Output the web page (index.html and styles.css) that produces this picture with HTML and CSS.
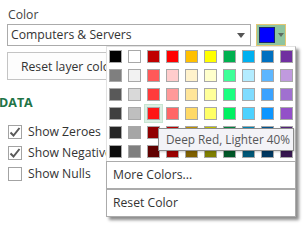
FILE: index.html
```html
<!DOCTYPE html>
<html>
<head>
  <title>Layer color</title>
  <link rel="stylesheet" href="styles.css">
</head>
<body>
  <div class="panel">
    <div class="label">Color</div>
    <div class="color-row">
      <div class="select">
        <span class="select-text">Computers &amp; Servers</span>
        <span class="caret"></span>
      </div>
      <div class="color-btn">
        <span class="current"></span>
        <span class="caret small"></span>
      </div>
    </div>
    <button type="button" class="reset-btn">Reset layer color</button>
    <div class="section">DATA</div>
    <label class="check">
      <span class="box"><svg width="12" height="12" viewBox="0 0 12 12"><path d="M1.5 6.5 L4.5 9.5 L10.5 2" fill="none" stroke="#5a5a5a" stroke-width="2"/></svg></span>
      Show Zeroes
    </label>
    <label class="check">
      <span class="box"><svg width="12" height="12" viewBox="0 0 12 12"><path d="M1.5 6.5 L4.5 9.5 L10.5 2" fill="none" stroke="#5a5a5a" stroke-width="2"/></svg></span>
      Show Negatives
    </label>
    <label class="check">
      <span class="box"></span>
      Show Nulls
    </label>
  </div>

  <div class="popup">
    <div class="palette" id="palette"></div>
    <div class="menu-item">More Colors...</div>
    <div class="menu-item">Reset Color</div>
    <div class="tooltip">Deep Red, Lighter 40%</div>
  </div>

  <script>
    const colors = [
      '#000000', '#ffffff', '#c00000', '#ff0000', '#ffc000', '#ffff00', '#00b050', '#00b0f0', '#0070c0', '#7030a0',
      '#7f7f7f', '#f2f2f2', '#ff5959', '#ffcccc', '#fff2cc', '#ffffcc', '#3dff98', '#b3ecff', '#5db6ff', '#c09ade',
      '#595959', '#d9d9d9', '#ff3b3b', '#ff9999', '#ffe599', '#ffff99', '#1aff80', '#7fdcff', '#3aa2ff', '#a070d0',
      '#404040', '#bfbfbf', '#ff1616', '#ff6666', '#ffd966', '#ffff66', '#00f062', '#4dd2ff', '#0e96ff', '#9350c8',
      '#262626', '#a6a6a6', '#900000', '#bf0000', '#bf9000', '#bfbf00', '#008440', '#0084b4', '#005490', '#54247a',
      '#0d0d0d', '#7f7f7f', '#600000', '#9c0000', '#7f6000', '#7f7f00', '#005828', '#005878', '#003860', '#381850'
    ];
    const palette = document.getElementById('palette');
    for (let i = 0; i < colors.length; i++) {
      const cell = document.createElement('span');
      cell.className = 'swatch';
      if (i === 32) {
        cell.classList.add('selected');
      }
      cell.style.background = colors[i];
      palette.appendChild(cell);
    }
  </script>
</body>
</html>
```

FILE: styles.css
```css
body {
  margin: 0;
  width: 304px;
  height: 246px;
  overflow: hidden;
  background-color: white;
  font-family: "Open Sans", "Noto Sans", sans-serif;
  font-size: 12.2px;
  color: #333;
}

.panel {
  padding: 6px 0 0 7px;
}

.label {
  line-height: 17px;
  height: 18px;
  color: #444;
  padding-left: 1px;
}

.color-row {
  display: flex;
  gap: 5px;
}

.select {
  box-sizing: border-box;
  width: 244px;
  height: 22px;
  border: 1px solid #ababab;
  display: flex;
  align-items: center;
  justify-content: space-between;
  padding: 0 5px 0 3px;
}

.select-text {
  line-height: 18px;
}

.caret {
  width: 0;
  height: 0;
  border-left: 4px solid transparent;
  border-right: 4px solid transparent;
  border-top: 5px solid #555;
}

.caret.small {
  border-left-width: 3px;
  border-right-width: 3px;
  border-top-width: 4px;
  border-top-color: #5b6b60;
}

.color-btn {
  box-sizing: border-box;
  width: 30px;
  height: 22px;
  border: 1px solid #e3c773;
  background-color: #8ec4a0;
  display: flex;
  align-items: center;
  padding-left: 2px;
  gap: 3px;
}

.current {
  box-sizing: border-box;
  width: 16px;
  height: 16px;
  background-color: #0000ff;
  border: 1px solid #1a2a60;
}

.reset-btn {
  display: block;
  box-sizing: border-box;
  margin-top: 6px;
  width: 130px;
  height: 28px;
  background-color: #fdfdfd;
  border: 1px solid #c4c4c4;
  font-family: inherit;
  font-size: 12.2px;
  color: #333;
  text-align: left;
  padding-left: 13px;
}

.section {
  margin: 14px 0 0 -8px;
  height: 27px;
  font-weight: bold;
  font-size: 12.5px;
  color: #217346;
  line-height: 17px;
}

.check {
  display: flex;
  align-items: center;
  gap: 6px;
  height: 21px;
  padding-left: 1px;
  white-space: nowrap;
}

.box {
  box-sizing: border-box;
  width: 14px;
  height: 14px;
  border: 1px solid #a3a3a3;
  background-color: white;
  display: flex;
  align-items: center;
  justify-content: center;
}

.popup {
  position: absolute;
  left: 106px;
  top: 46px;
  width: 190px;
  background-color: white;
  box-shadow: 3px 3px 3px rgba(0, 0, 0, 0.45);
}

.palette {
  box-sizing: border-box;
  display: grid;
  grid-template-columns: repeat(10, 13px);
  grid-auto-rows: 13px;
  gap: 6px;
  padding: 3px 0 3px 2px;
  border: 1px solid #e2e2e2;
  border-bottom: none;
  border-right-color: #b8b8b8;
  height: 115px;
}

.swatch {
  box-sizing: border-box;
  width: 13px;
  height: 13px;
  border: 1px solid #a8a8a8;
}

.swatch.selected {
  box-shadow: 0 0 0 2px #dbefe3, 0 0 0 3px #c6e4d1;
}

.menu-item {
  box-sizing: border-box;
  height: 28px;
  border: 1px solid #ababab;
  line-height: 26px;
  padding-left: 6px;
  color: #333;
}

.tooltip {
  position: absolute;
  left: 52px;
  top: 82px;
  box-sizing: border-box;
  width: 136px;
  height: 23px;
  background-color: #f3f3f7;
  border: 1px solid #8c8c8c;
  color: #575757;
  font-size: 11.8px;
  line-height: 21px;
  padding-left: 7px;
  white-space: nowrap;
  box-shadow: 1px 1px 2px rgba(0, 0, 0, 0.2);
}
```
